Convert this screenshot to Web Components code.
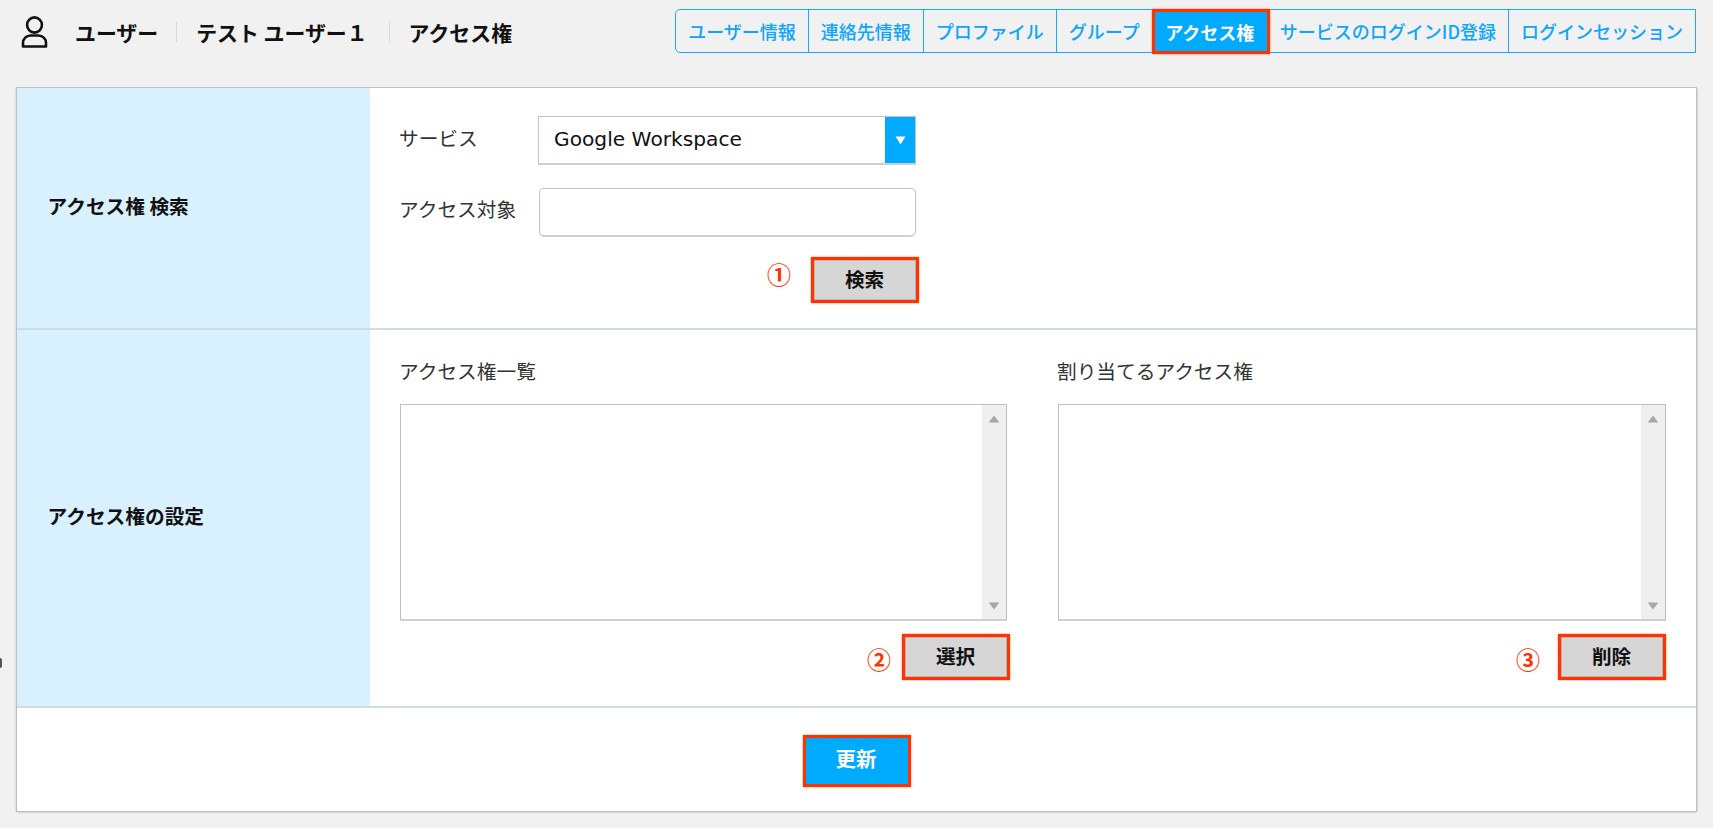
<!DOCTYPE html>
<html lang="ja">
<head>
<meta charset="utf-8">
<title>アクセス権</title>
<style>
html,body{margin:0;padding:0;background:#fff;}
body{font-family:"Noto Sans CJK JP","Noto Sans",sans-serif;color:#222;}
</style>
</head>
<body>
<x-page>
  <x-header>
    <x-crumb>ユーザー</x-crumb>
    <x-crumb>テスト ユーザー１</x-crumb>
    <x-crumb>アクセス権</x-crumb>
    <x-tabs slot="tabs">
      <x-tab>ユーザー情報</x-tab>
      <x-tab>連絡先情報</x-tab>
      <x-tab>プロファイル</x-tab>
      <x-tab>グループ</x-tab>
      <x-tab active>アクセス権</x-tab>
      <x-tab>サービスのログインID登録</x-tab>
      <x-tab>ログインセッション</x-tab>
    </x-tabs>
  </x-header>
  <x-card>
    <x-row label="アクセス権 検索" style="--row-h:240px;--pad-top:28px">
      <x-search-form>
        <x-field label="サービス"><x-select value="Google Workspace"></x-select></x-field>
        <x-field label="アクセス対象" style="margin-top:23px;margin-bottom:20px;--label-pad:8px"><x-text-input></x-text-input></x-field>
        <x-actions mark="①" style="--mark-gap:20px;--mark-lift:13px;margin-right:1px"><x-button>検索</x-button></x-actions>
      </x-search-form>
    </x-row>
    <x-row label="アクセス権の設定" style="--row-h:376px;--pad-top:27px">
      <x-columns>
        <x-column label="アクセス権一覧" style="--box-w:607px">
          <x-actions mark="②" style="--mark-gap:11px;--mark-lift:-4px;margin-right:-3px"><x-button>選択</x-button></x-actions>
        </x-column>
        <x-column label="割り当てるアクセス権" style="--box-w:608px">
          <x-actions mark="③" style="--mark-gap:18px;--mark-lift:-4px"><x-button>削除</x-button></x-actions>
        </x-column>
      </x-columns>
    </x-row>
    <x-footer-row><x-button primary>更新</x-button></x-footer-row>
  </x-card>
</x-page>
<script>
function def(name, html, setup){
  customElements.define(name, class extends HTMLElement{
    constructor(){
      super();
      const r=this.attachShadow({mode:'open'});
      r.innerHTML=html;
    }
    connectedCallback(){ if(setup) setup(this, this.shadowRoot); }
  });
}
const FONT='"Noto Sans CJK JP","Noto Sans",sans-serif';

def('x-page',`<style>
:host{display:block;position:relative;background:#f1f1f1;padding-bottom:17px;font-family:${FONT};}
.edge{position:absolute;left:0;top:658px;width:1.5px;height:10px;background:#555;border-radius:0 2px 2px 0;}
</style><slot></slot><div class="edge"></div>`);

def('x-header',`<style>
:host{display:flex;justify-content:space-between;align-items:flex-start;height:88px;padding:9px 17px 0 21px;box-sizing:border-box;}
.left{display:flex;align-items:center;height:46px;}
svg{display:block;width:28px;height:32px;margin-right:26px;}
.crumbs{display:flex;align-items:center;}
::slotted(x-crumb:nth-of-type(1)){margin-right:19px;padding-right:18px;border-right:1px solid #d9d9d9;}
::slotted(x-crumb:nth-of-type(2)){margin-right:19px;padding-right:21px;border-right:1px solid #d9d9d9;}
</style>
<div class="left">
<svg viewBox="0 0 28 32" fill="none" stroke="#111" stroke-width="2.6">
<ellipse cx="13.5" cy="9" rx="7.4" ry="7.6"/>
<path d="M2 30.5 V27 a7.5 7.5 0 0 1 7.5-7.5 h8 a7.5 7.5 0 0 1 7.5 7.5 v3.5 Z" stroke-linejoin="round"/>
</svg>
<div class="crumbs"><slot></slot></div>
</div>
<slot name="tabs"></slot>`);

def('x-crumb',`<style>
:host{display:block;font-size:20.9px;font-weight:700;line-height:20px;color:#111;white-space:nowrap;}
</style><slot></slot>`);

def('x-tabs',`<style>
:host{display:flex;height:44px;box-sizing:border-box;border:1px solid #1ea7ff;border-radius:5px 0 0 5px;background:#f1f1f1;}
</style><slot></slot>`);

def('x-tab',`<style>
:host{display:flex;align-items:center;padding:0 12px;font-size:18px;font-weight:500;color:#0ea5ff;white-space:nowrap;border-right:1px solid #1ea7ff;}
:host(:last-child){border-right:0;}
:host([active]){background:#00aaff;color:#fff;font-weight:700;border:3px solid #ff3300;margin:-1px -2px -2px -1px;padding:0 12.5px 0 10.5px;box-shadow:0 0 2px #ff7a55;z-index:1;}
</style><slot></slot>`);

def('x-card',`<style>
:host{display:block;margin:0 17px;background:#fff;box-shadow:0 0 0 1px #c0c0c0,1px 1px 2px #aaa,-1px 0 2px #bbb;}
</style><slot></slot>`);

def('x-row',`<style>
:host{display:grid;grid-template-columns:353px 1fr;height:var(--row-h);box-sizing:content-box;border-bottom:2px solid #cfdde2;}
.head{display:flex;align-items:center;padding:0 0 6px 30.5px;box-sizing:border-box;background:#d9f1ff;font-size:19.7px;font-weight:700;color:#111;}
.body{padding:var(--pad-top) 30px 0 30px;min-width:0;}
</style><div class="head"></div><div class="body"><slot></slot></div>`,
(el,r)=>{r.querySelector('.head').textContent=el.getAttribute('label');});

def('x-search-form',`<style>
:host{display:flex;flex-direction:column;width:520px;}
</style><slot></slot>`);

def('x-field',`<style>
:host{display:flex;align-items:center;height:49px;margin-left:-1px;}
.l{width:139px;flex:none;font-size:19.7px;color:#333;padding-bottom:var(--label-pad,6px);}
</style><div class="l"></div><slot></slot>`,
(el,r)=>{r.querySelector('.l').textContent=el.getAttribute('label');});

def('x-select',`<style>
:host{display:flex;width:378px;height:49px;box-sizing:border-box;border:1px solid #c4c4c4;border-bottom:2px solid #d0d0d0;background:#fff;}
.v{flex:1;padding:0 0 2px 15px;display:flex;align-items:center;font-family:"DejaVu Sans",sans-serif;font-size:20.2px;color:#111;}
.a{width:30px;background:#00aaff;display:flex;align-items:center;justify-content:center;}
svg{width:11px;height:9px;display:block;}
</style><div class="v"></div><div class="a"><svg viewBox="0 0 11 9"><path d="M0.5 0.5h10L5.5 8.5z" fill="#fff"/></svg></div>`,
(el,r)=>{r.querySelector('.v').textContent=el.getAttribute('value');});

def('x-text-input',`<style>
:host{display:block;width:377.5px;height:49px;margin-left:.5px;box-sizing:border-box;}
input{display:block;width:100%;height:100%;box-sizing:border-box;border:1px solid #c4c4c4;border-bottom:2px solid #d0d0d0;border-radius:5px;background:#fff;padding:0 12px;outline:none;font:inherit;}
</style><input type="text">`);

def('x-actions',`<style>
:host{display:flex;justify-content:flex-end;align-items:center;}
.m{margin-right:var(--mark-gap,16px);margin-bottom:var(--mark-lift,0);font-family:"Noto Sans CJK JP",sans-serif;font-size:24px;font-weight:700;line-height:30px;color:#ff3300;}
</style><span class="m"></span><slot></slot>`,
(el,r)=>{r.querySelector('.m').textContent=el.getAttribute('mark');});

def('x-button',`<style>
:host{display:block;}
button{display:block;width:108px;height:46px;box-sizing:border-box;padding:0 1px 3px 0;margin:0;border:3px solid #ff3300;background:#d6d6d6;box-shadow:inset 0 0 0 1px #bcb3b0,0 0 2px #ff8a66;color:#111;font-family:${FONT};font-size:19.6px;font-weight:700;}
:host([primary]) button{background:#00aaff;color:#fff;height:52px;width:108px;padding-bottom:6px;font-size:20.5px;box-shadow:0 0 2px #ff8a66;}
</style><button type="button"><slot></slot></button>`);

def('x-columns',`<style>
:host{display:grid;grid-template-columns:607px 608px;column-gap:51px;}
</style><slot></slot>`);

def('x-column',`<style>
:host{display:block;}
.l{font-size:19.7px;line-height:28px;color:#333;margin-bottom:19px;margin-left:-1px;}
.box{position:relative;width:var(--box-w);height:217px;box-sizing:border-box;border:1px solid #c0c0c0;border-bottom:2px solid #d0d0d0;background:#fff;display:flex;justify-content:flex-end;margin-bottom:13px;}
.sb{width:24px;background:#efefef;display:flex;flex-direction:column;justify-content:space-between;align-items:center;padding:10px 1px 9px 0;box-sizing:border-box;}
svg{width:12px;height:8px;display:block;}
</style><div class="l"></div>
<div class="box"><div class="sb">
<svg viewBox="0 0 13 9"><path d="M6.5 0.5L12.5 8.5H0.5z" fill="#a6a6a6"/></svg>
<svg viewBox="0 0 13 9"><path d="M0.5 0.5H12.5L6.5 8.5z" fill="#a6a6a6"/></svg>
</div></div><slot></slot>`,
(el,r)=>{r.querySelector('.l').textContent=el.getAttribute('label');});

def('x-footer-row',`<style>
:host{display:flex;justify-content:center;height:103px;padding-top:27px;box-sizing:border-box;}
</style><slot></slot>`);
</script>
</body>
</html>
